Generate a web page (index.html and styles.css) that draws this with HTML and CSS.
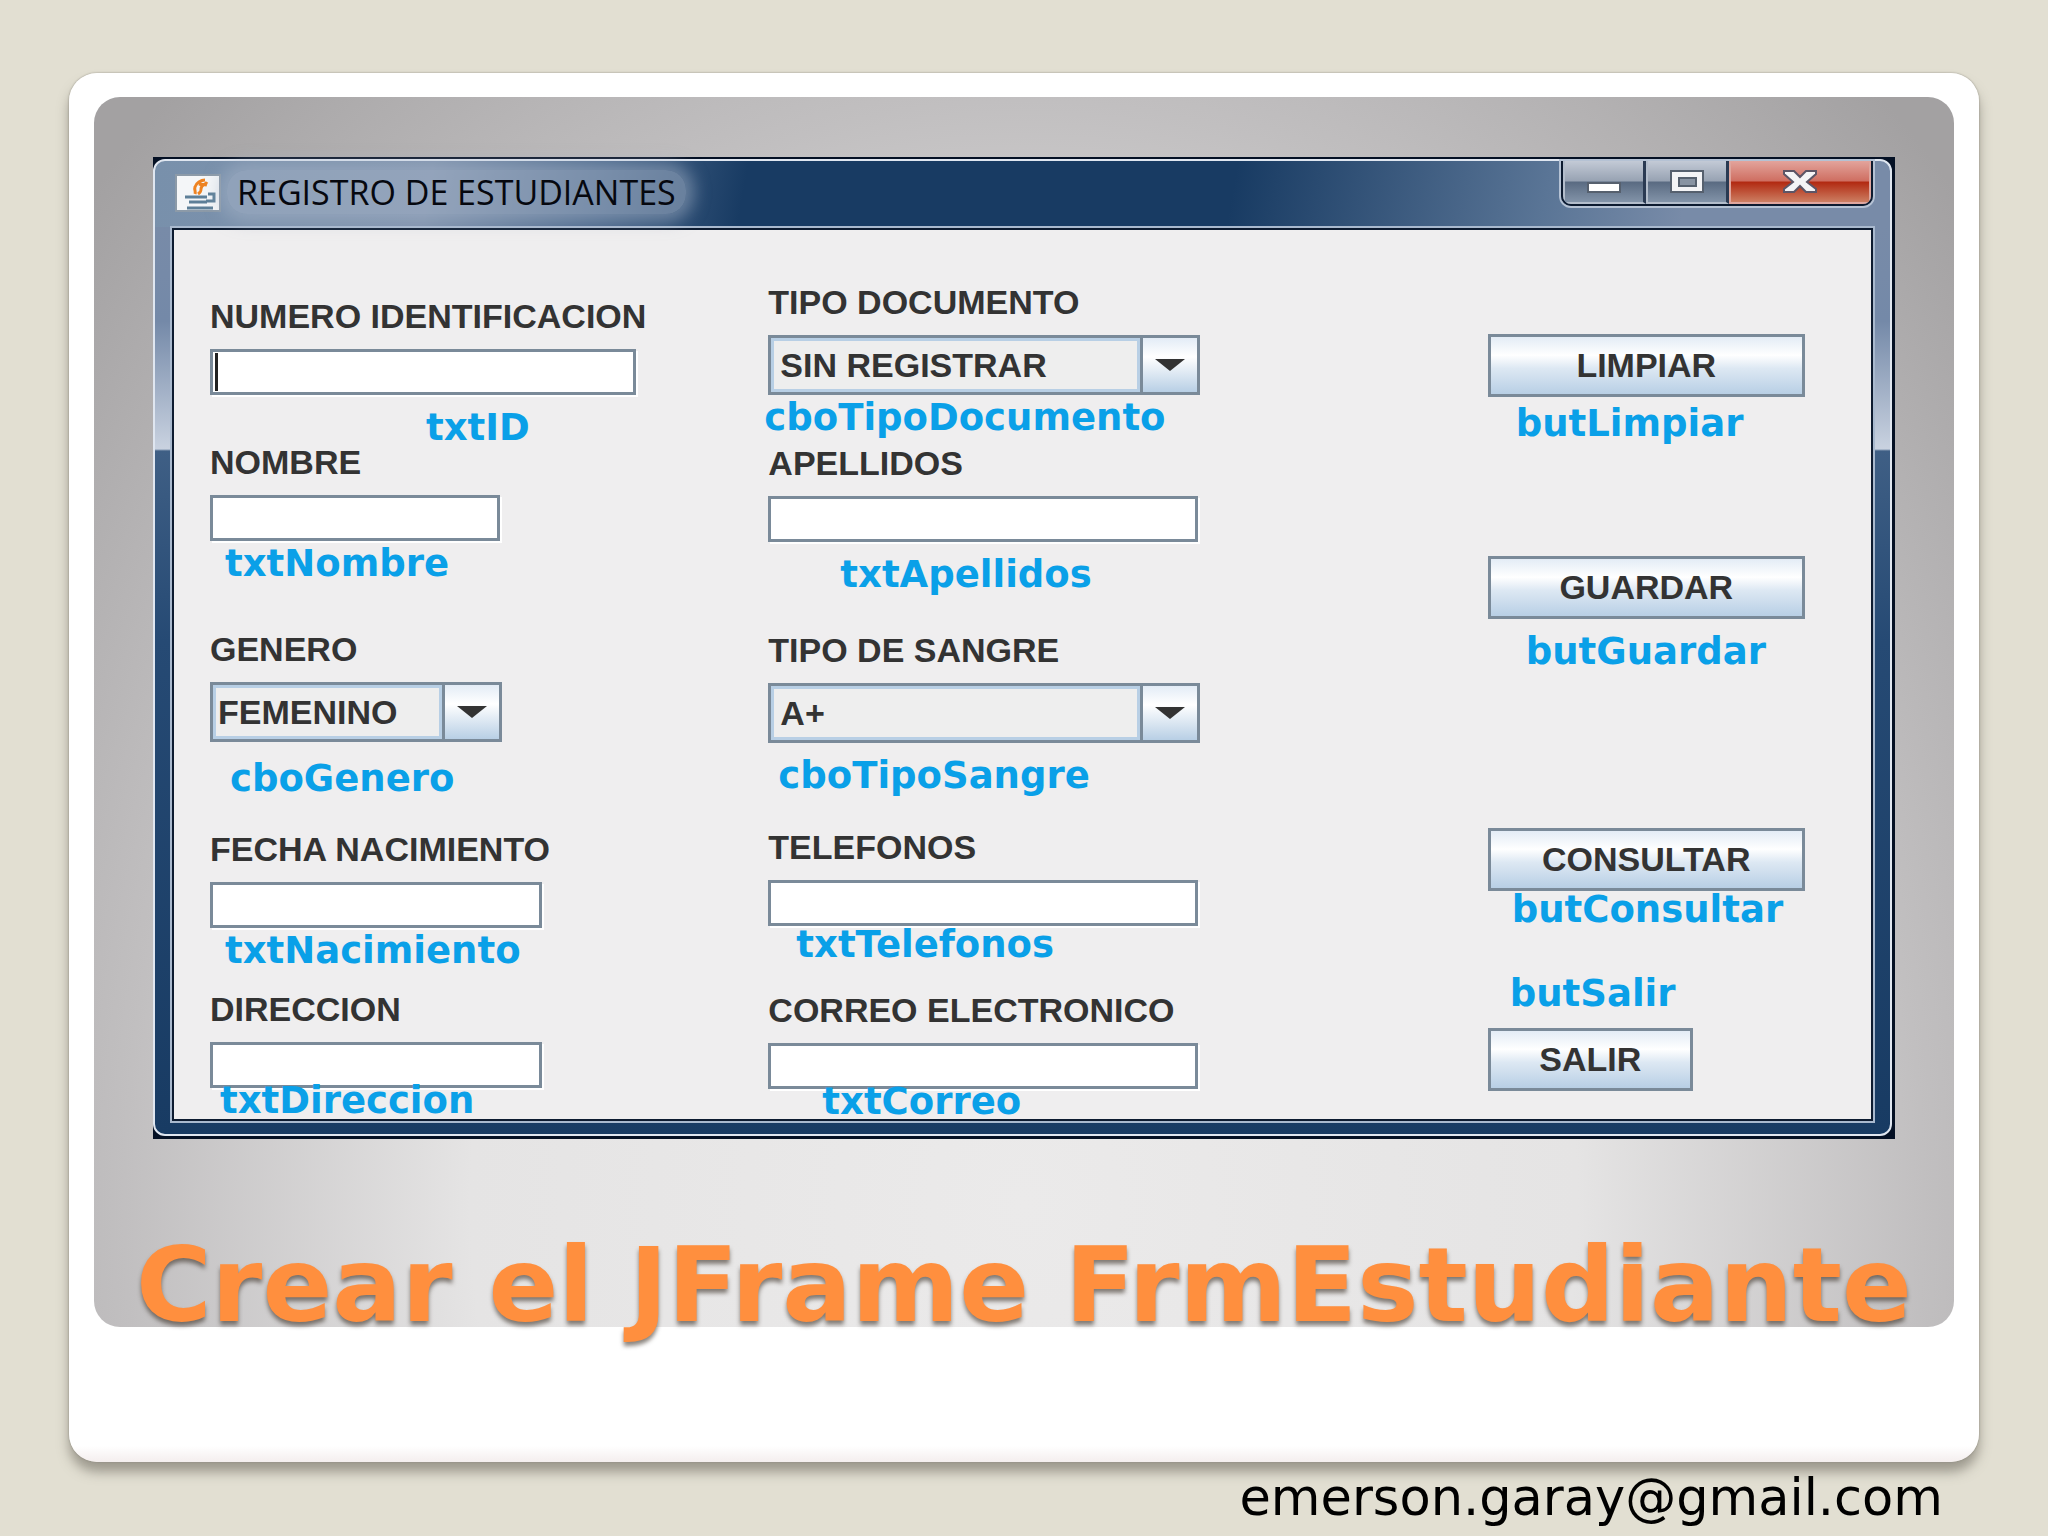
FILE: index.html
```html
<!DOCTYPE html>
<html lang="es">
<head>
    <meta charset="UTF-8">
    <meta name="viewport" content="width=device-width, initial-scale=1.0">
    <title>Crear el JFrame FrmEstudiante</title>
    <link rel="stylesheet" href="styles.css">
</head>
<body>
    <main class="slide">
        <section class="panel">
            <div class="window">
                <div class="frame">
                    <header class="title-bar">
                        <svg class="java-icon" viewBox="0 0 46 38" aria-hidden="true">
                            <rect x="1" y="1" width="44" height="36" fill="#f4f6f8" stroke="#8c9aa8" stroke-width="2"/>
                            <path d="M30 6c-4 0-9 3-10 7-1 3 1 4 0 7M32 8c-2 3-6 3-6 7 0 2 0 3-3 5M24 10c3 1 5 0 8 1" fill="none" stroke="#ee8322" stroke-width="3"/>
                            <path d="M10 23h22M33 20h6v7h-8M14 28h18M12 34h26" fill="none" stroke="#5d7f98" stroke-width="3"/>
                        </svg>
                        <span class="title">REGISTRO DE ESTUDIANTES</span>
                        <div class="window-buttons">
                            <button type="button" class="win-btn minimize" aria-label="Minimizar">
                                <svg width="36" height="24" viewBox="0 0 36 24"><rect x="2" y="13" width="32" height="9" fill="#fff" stroke="#56606e" stroke-width="2"/></svg>
                            </button>
                            <button type="button" class="win-btn maximize" aria-label="Maximizar">
                                <svg width="36" height="24" viewBox="0 0 36 24"><rect x="2" y="1" width="32" height="21" fill="#f4f4f6" stroke="#56606e" stroke-width="2"/><rect x="10" y="8" width="17" height="8" fill="#8994a3" stroke="#56606e" stroke-width="2"/></svg>
                            </button>
                            <button type="button" class="win-btn close" aria-label="Cerrar">
                                <svg width="36" height="24" viewBox="0 0 36 24"><path d="M2 1h10l6 6 6-6h10v3l-9 8 9 7v3H24l-6-6-6 6H2v-3l9-7-9-8z" fill="#f4f4f6" stroke="#5c5566" stroke-width="2"/></svg>
                            </button>
                        </div>
                    </header>

                    <form class="content">
                        <div class="column column-left">
                            <div class="field">
                                <label for="txtID">NUMERO IDENTIFICACION</label>
                                <div class="focused"><input type="text" id="txtID" class="w-id"></div>
                                <span class="note note-id">txtID</span>
                            </div>
                            <div class="field">
                                <label for="txtNombre">NOMBRE</label>
                                <input type="text" id="txtNombre" class="w-nombre">
                                <span class="note">txtNombre</span>
                            </div>
                            <div class="field">
                                <label for="cboGenero">GENERO</label>
                                <div class="combo w-genero">
                                    <select id="cboGenero"><option>FEMENINO</option><option>MASCULINO</option></select>
                                    <span class="arrow"></span>
                                </div>
                                <span class="note note-genero">cboGenero</span>
                            </div>
                            <div class="field">
                                <label for="txtNacimiento">FECHA NACIMIENTO</label>
                                <input type="text" id="txtNacimiento" class="w-fecha">
                                <span class="note">txtNacimiento</span>
                            </div>
                            <div class="field">
                                <label for="txtDireccion">DIRECCION</label>
                                <input type="text" id="txtDireccion" class="w-fecha">
                                <span class="note note-direccion">txtDireccion</span>
                            </div>
                        </div>

                        <div class="column column-middle">
                            <div class="field">
                                <label for="cboTipoDocumento">TIPO DOCUMENTO</label>
                                <div class="combo">
                                    <select id="cboTipoDocumento"><option>SIN REGISTRAR</option></select>
                                    <span class="arrow"></span>
                                </div>
                                <span class="note note-documento">cboTipoDocumento</span>
                            </div>
                            <div class="field">
                                <label for="txtApellidos">APELLIDOS</label>
                                <input type="text" id="txtApellidos">
                                <span class="note note-apellidos">txtApellidos</span>
                            </div>
                            <div class="field">
                                <label for="cboTipoSangre">TIPO DE SANGRE</label>
                                <div class="combo">
                                    <select id="cboTipoSangre"><option>A+</option></select>
                                    <span class="arrow"></span>
                                </div>
                                <span class="note note-sangre">cboTipoSangre</span>
                            </div>
                            <div class="field">
                                <label for="txtTelefonos">TELEFONOS</label>
                                <input type="text" id="txtTelefonos">
                                <span class="note note-telefonos">txtTelefonos</span>
                            </div>
                            <div class="field">
                                <label for="txtCorreo">CORREO ELECTRONICO</label>
                                <input type="text" id="txtCorreo">
                                <span class="note note-correo">txtCorreo</span>
                            </div>
                        </div>

                        <div class="column column-right">
                            <div class="field">
                                <button type="button" class="btn">LIMPIAR</button>
                                <span class="note note-limpiar">butLimpiar</span>
                            </div>
                            <div class="field">
                                <button type="button" class="btn">GUARDAR</button>
                                <span class="note note-guardar">butGuardar</span>
                            </div>
                            <div class="field">
                                <button type="button" class="btn">CONSULTAR</button>
                                <span class="note note-consultar">butConsultar</span>
                            </div>
                            <div class="field">
                                <span class="note note-salir">butSalir</span>
                                <button type="button" class="btn btn-salir">SALIR</button>
                            </div>
                        </div>
                    </form>
                </div>
            </div>
            <h1>Crear el JFrame FrmEstudiante</h1>
        </section>
    </main>
    <footer>emerson.garay@gmail.com</footer>
</body>
</html>
```
FILE: styles.css
```css
* {
    box-sizing: border-box;
}

body {
    margin: 0;
    padding: 73px 69px 0;
    background-color: #e2dfd2;
    font-family: "Liberation Sans", Arial, sans-serif;
}

.slide {
    padding: 24px 25px 135px;
    background: linear-gradient(#fff, #fff calc(100% - 16px), #f4eeee);
    border-radius: 28px;
    box-shadow: 0 0 2px #8a877e, 0 10px 12px rgba(90, 85, 75, 0.5);
}

.panel {
    padding: 60px 59px 0;
    border-radius: 26px;
    background: radial-gradient(ellipse 62% 115% at 50% 90%, #ebeaea 0%, #e5e4e4 48%, #c1bfc0 78%, #a3a1a2 108%);
}

/* Java window */
.window {
    background-color: #041024;
    padding: 2px 3px 3px 0;
}

.frame {
    padding: 0 17px 13px;
    border: 2px solid #dfe6f0;
    border-radius: 12px;
    background: linear-gradient(100deg, #7890ab 0, #8093ae 16%, #4a678b 26%, #183b63 34%, #183b63 62%, #5a7596 80%, #788ba8 88%) top / 100% 66px no-repeat,
        linear-gradient(#788ba8 66px, #7489a8 160px, #c9d2e0 288px, #3f5f85 290px, #264a74 480px, #183b63 100%);
}

.title-bar {
    display: flex;
    align-items: flex-start;
    height: 67px;
}

.java-icon {
    width: 46px;
    height: 38px;
    margin: 13px 0 0 3px;
}

.title {
    margin: 9px 0 0 6px;
    padding: 0 10px;
    font-family: "Open Sans", sans-serif;
    font-size: 34px;
    line-height: 44px;
    color: #06080f;
    border-radius: 20px;
    background-color: rgba(165, 180, 200, 0.5);
    box-shadow: 0 0 16px 8px rgba(165, 180, 200, 0.5);
}

.window-buttons {
    display: flex;
    margin-left: auto;
    border: 2px solid #0d1b30;
    border-top: 0;
    border-radius: 0 0 10px 10px;
    box-shadow: 0 0 0 2px #b5c2d4;
    overflow: hidden;
}

.win-btn {
    display: flex;
    justify-content: center;
    height: 43px;
    padding: 9px 0 0;
    border: 2px solid #b3bdcb;
    border-top: 0;
    background: linear-gradient(#c3cad6, #98a3b3 48%, #5a6b82 52%, #8293a8);
}

.minimize,
.maximize {
    width: 83px;
    border-right: 3px solid #2a3a52;
}

.close {
    width: 142px;
    border-color: #dfa69e;
    background: linear-gradient(#e3a49c, #cf6f62 48%, #b22a12 52%, #cc7e62);
}

.content {
    display: grid;
    grid-template-columns: 558fr 719fr 383fr;
    padding: 55px 0 0 36px;
    background-color: #efeeef;
    border: 2px solid #0d1b30;
    outline: 2px solid #a9b9ce;
}

.column {
    display: grid;
    align-content: start;
}

.column-left {
    padding-top: 14px;
    grid-template-rows: 146px 187px 200px 160px 126px;
}

.column-middle {
    grid-template-rows: 161px 187px 197px 163px 126px;
}

.column-right {
    padding-top: 49px;
    grid-template-rows: 222px 272px 149px auto;
}

.field {
    display: flex;
    flex-direction: column;
    align-items: flex-start;
}

label {
    margin-bottom: 16px;
    font-size: 34px;
    font-weight: bold;
    line-height: 34px;
    color: #333;
    white-space: nowrap;
}

input {
    width: 430px;
    height: 46px;
    padding: 0 6px;
    font-size: 34px;
    background-color: #fff;
    border: 3px solid #7a8a99;
    box-shadow: 2px 2px 0 #fff;
}

/* text cursor of the active box */
.focused {
    display: flex;
    position: relative;
}

.focused::after {
    content: "";
    position: absolute;
    left: 5px;
    top: 4px;
    width: 3px;
    height: 38px;
    background-color: #222;
}

.w-id {
    width: 426px;
}

.w-nombre {
    width: 290px;
}

.w-fecha {
    width: 332px;
}

.combo {
    display: flex;
    width: 432px;
    height: 60px;
    border: 3px solid #7a8a99;
}

.w-genero {
    width: 292px;
}

.combo select {
    flex: 1;
    min-width: 0;
    padding: 0 6px;
    appearance: none;
    border: 3px solid #b8cfe5;
    border-radius: 0;
    background-color: #eee;
    color: #333;
    font: bold 34px "Liberation Sans", Arial, sans-serif;
}

.w-genero select {
    padding: 0 2px;
}

.arrow {
    display: flex;
    align-items: center;
    justify-content: center;
    width: 57px;
    border-left: 3px solid #7a8a99;
    background: linear-gradient(#e3ecf6, #fff 35%, #b8cfe5);
}

.arrow::after {
    content: "";
    border: 15px solid transparent;
    border-top: 12px solid #333;
    border-bottom: 0;
}

.btn {
    width: 317px;
    height: 63px;
    border: 3px solid #7a8a99;
    background: linear-gradient(#e3ecf6, #fff 32%, #dde8f3 55%, #b8cfe5);
    color: #333;
    font: bold 34px "Liberation Sans", Arial, sans-serif;
}

.btn-salir {
    width: 205px;
    margin-top: 17px;
}

/* variable names written next to each control */
.note {
    margin: 6px 0 0 15px;
    font-family: "DejaVu Sans", Verdana, sans-serif;
    font-size: 37px;
    font-weight: bold;
    line-height: 34px;
    color: #0aa0e8;
}

.note-id {
    margin: 16px 0 0 216px;
}

.note-genero {
    margin: 20px 0 0 20px;
}

.note-direccion {
    margin: -4px 0 0 10px;
}

.note-documento {
    margin-left: -4px;
}

.note-apellidos {
    margin: 16px 0 0 72px;
}

.note-sangre {
    margin: 16px 0 0 10px;
}

.note-telefonos {
    margin: 2px 0 0 28px;
}

.note-correo {
    margin: -4px 0 0 54px;
}

.note-limpiar {
    margin: 10px 0 0 28px;
}

.note-guardar {
    margin: 16px 0 0 38px;
}

.note-consultar {
    margin: 2px 0 0 24px;
}

.note-salir {
    margin: 0 0 0 22px;
}

h1 {
    margin: 104px -20px 0;
    font-family: "DejaVu Sans", Verdana, sans-serif;
    font-size: 103px;
    line-height: 84px;
    text-align: center;
    white-space: nowrap;
    color: #ff8f3e;
    text-shadow: 0 4px 4px rgba(60, 50, 40, 0.6);
}

footer {
    padding: 4px 36px 0 0;
    font-family: "DejaVu Sans", Verdana, sans-serif;
    font-size: 51px;
    line-height: 64px;
    text-align: right;
    color: #000;
}
```
